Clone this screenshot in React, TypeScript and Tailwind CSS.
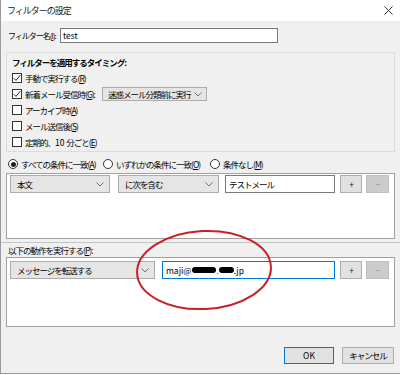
import React from "react";

const Chevron = () => (
  <svg width="8" height="5" viewBox="0 0 8 5" className="shrink-0">
    <polyline points="0.5,0.5 4,4 7.5,0.5" fill="none" stroke="#707070" strokeWidth="1" />
  </svg>
);

const Check = ({ checked }: { checked?: boolean }) => (
  <div className="w-[10px] h-[10px] border border-[#333] bg-white shrink-0 flex items-center justify-center">
    {checked && (
      <svg width="8" height="8" viewBox="0 0 8 8">
        <polyline points="0.8,4.2 3,6.4 7.3,1.2" fill="none" stroke="#222" strokeWidth="1" />
      </svg>
    )}
  </div>
);

const Radio = ({ on }: { on?: boolean }) => (
  <div className="w-[10px] h-[10px] rounded-full border border-[#333] bg-white shrink-0 flex items-center justify-center">
    {on && <div className="w-[5px] h-[5px] rounded-full bg-[#222]" />}
  </div>
);

const U = ({ c }: { c: string }) => <span className="underline underline-offset-[1px]">{c}</span>;

const Select = ({ w, text }: { w: string; text: string }) => (
  <div className={`flex items-center justify-between h-[18px] ${w} bg-[#e5e5e5] border border-[#acacac] pl-[6px] pr-[5px] shrink-0`}>
    <span>{text}</span>
    <Chevron />
  </div>
);

const PlusMinus = () => (
  <>
    <div className="w-[22px] h-[18px] ml-[5px] bg-[#e1e1e1] border border-[#adadad] flex items-center justify-center text-[#222] shrink-0">+</div>
    <div className="w-[23px] h-[18px] ml-[4px] bg-[#cccccc] border border-[#bfbfbf] flex items-center justify-center text-[#888] shrink-0">−</div>
  </>
);

export default function App() {
  return (
    <div className="relative w-[400px] h-[375px] bg-white overflow-hidden text-[8.5px] tracking-[-1px] text-black font-['Noto_Sans_CJK_JP','Noto_Sans',sans-serif] leading-none whitespace-nowrap">
      <div className="w-[400px] h-[374px] border-l border-b border-[#9a9a9a] bg-[#f0f0f0] flex flex-col">
        {/* title bar */}
        <div className="h-[21px] bg-white flex items-center justify-between pl-[6px] pr-[7px]">
          <span className="text-[#222] text-[9px]">フィルターの設定</span>
          <svg width="9" height="9" viewBox="0 0 9 9">
            <path d="M0.5 0.5 L8.5 8.5 M8.5 0.5 L0.5 8.5" stroke="#333" strokeWidth="1" />
          </svg>
        </div>

        <div className="flex flex-col px-[5px]">
          {/* name row */}
          <div className="mt-[7px] h-[15px] flex items-center">
            <div className="w-[54px] pl-[2px] shrink-0 text-[8px] tracking-[-1px]">
              フィルター名(<U c="I" />):
            </div>
            <div className="w-[218px] h-[15px] border border-[#7a7a7a] bg-white flex items-center pl-[2px] shrink-0 tracking-normal">test</div>
          </div>

          {/* group box */}
          <div className="mt-[9px] h-[100px] border border-[#dcdcdc] pl-[5px] pt-[1px] flex flex-col">
            <div className="h-[16px] flex items-center font-bold">フィルターを適用するタイミング:</div>
            <div className="h-[16px] flex items-center gap-[3px]">
              <Check checked />
              <span>
                手動で実行する(<U c="R" />)
              </span>
            </div>
            <div className="h-[16px] flex items-center">
              <div className="w-[90px] flex items-center gap-[3px] shrink-0">
                <Check checked />
                <span>
                  新着メール受信時(<U c="G" />):
                </span>
              </div>
              <div className="h-[14px] w-[105px] bg-[#e5e5e5] border border-[#acacac] flex items-center justify-between pl-[5px] pr-[4px] shrink-0">
                <span>迷惑メール分類前に実行</span>
                <Chevron />
              </div>
            </div>
            <div className="h-[16px] flex items-center gap-[3px]">
              <Check />
              <span>
                アーカイブ時(<U c="A" />)
              </span>
            </div>
            <div className="h-[16px] flex items-center gap-[3px]">
              <Check />
              <span>
                メール送信後(<U c="S" />)
              </span>
            </div>
            <div className="h-[16px] flex items-center gap-[3px]">
              <Check />
              <span>
                定期的、<span className="tracking-normal">10&nbsp;</span>分ごと(<U c="E" />)
              </span>
            </div>
          </div>

          {/* radio row */}
          <div className="mt-[4px] h-[16px] flex items-center pl-[2px]">
            <div className="w-[95px] flex items-center gap-[3px] shrink-0">
              <Radio on />
              <span>
                すべての条件に一致(<U c="A" />)
              </span>
            </div>
            <div className="w-[107px] flex items-center gap-[3px] shrink-0">
              <Radio />
              <span>
                いずれかの条件に一致(<U c="O" />)
              </span>
            </div>
            <div className="flex items-center gap-[3px]">
              <Radio />
              <span>
                条件なし(<U c="M" />)
              </span>
            </div>
          </div>

          {/* conditions box */}
          <div className="mt-[1px] h-[66px] border border-[#a0a0a0] bg-white pl-[3px] pt-[1px]">
            <div className="flex items-center">
              <Select w="w-[100px]" text="本文" />
              <div className="ml-[8px]">
                <Select w="w-[101px]" text="に次を含む" />
              </div>
              <div className="ml-[6px] w-[110px] h-[18px] border border-[#7a7a7a] bg-white flex items-center pl-[3px] shrink-0">
                テストメール
              </div>
              <PlusMinus />
            </div>
          </div>
        </div>

        {/* separator */}
        <div className="mt-[3px] border-t border-[#c4c4c4]" />

        <div className="flex flex-col px-[5px]">
          <div className="h-[14px] flex items-center pl-[2px]">
            以下の動作を実行する(<U c="P" />):
          </div>
          <div className="h-[70px] border border-[#a0a0a0] bg-white pl-[3px] pt-[3px]">
            <div className="flex items-center">
              <Select w="w-[145px]" text="メッセージを転送する" />
              <div className="ml-[7px] w-[173px] h-[18px] border border-[#0078d7] bg-white flex items-center pl-[3px] shrink-0 tracking-normal">
                <span>maji@</span>
                <span className="inline-block w-[24px] h-[6px] rounded-full bg-black ml-[1px]" />
                <span className="text-[#777]">.</span>
                <span className="inline-block w-[15px] h-[6px] rounded-full bg-black" />
                <span>.jp</span>
              </div>
              <PlusMinus />
            </div>
          </div>

          {/* buttons */}
          <div className="mt-[20px] flex justify-end pr-[1px]">
            <div className="w-[50px] h-[17px] bg-[#e1e1e1] border border-[#0078d7] flex items-center justify-center tracking-normal">OK</div>
            <div className="ml-[8px] w-[52px] h-[17px] bg-[#e1e1e1] border border-[#adadad] flex items-center justify-center">キャンセル</div>
          </div>
        </div>
      </div>

      {/* red hand-drawn ellipse */}
      <svg className="absolute left-0 top-0 pointer-events-none" width="400" height="375" viewBox="0 0 400 375">
        <ellipse cx="204" cy="270" rx="67" ry="39" fill="none" stroke="#c8202a" strokeWidth="2" transform="rotate(-3 204 270)" />
      </svg>
    </div>
  );
}
